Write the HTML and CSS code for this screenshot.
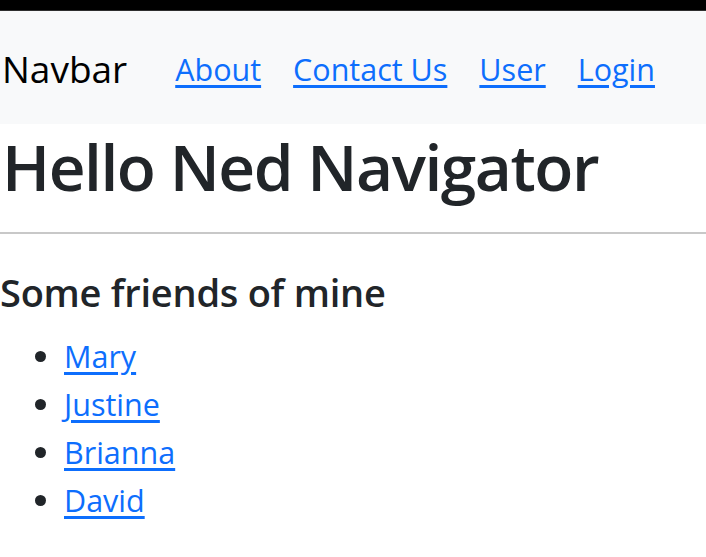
FILE: index.html
```html
<!DOCTYPE html>
<html lang="en">
<head>
<meta charset="utf-8">
<title>Hello Ned Navigator</title>
<link rel="stylesheet" href="styles.css">
</head>
<body>
<div class="topbar"></div>
<nav class="navbar">
  <span class="brand">Navbar</span>
  <ul class="nav-links">
    <li><a href="#">About</a></li>
    <li><a href="#">Contact Us</a></li>
    <li><a href="#">User</a></li>
    <li><a href="#">Login</a></li>
  </ul>
</nav>
<main class="content">
  <h1 class="title">Hello Ned Navigator</h1>
  <hr class="divider">
  <h4 class="subtitle">Some friends of mine</h4>
  <ul class="friends">
    <li><a href="#">Mary</a></li>
    <li><a href="#">Justine</a></li>
    <li><a href="#">Brianna</a></li>
    <li><a href="#">David</a></li>
  </ul>
</main>
</body>
</html>
```

FILE: styles.css
```css
html, body {
  margin: 0;
  padding: 0;
  background: #fff;
}
body {
  font-family: "Open Sans", "Noto Sans", sans-serif;
  color: #212529;
  font-size: 30.5px;
  line-height: 48px;
  overflow: hidden;
}
a {
  color: #0d6efd;
  text-decoration: underline;
  text-decoration-thickness: 3px;
  text-underline-offset: 4px;
}
.topbar {
  height: 10px;
  background: #000;
  border-bottom: 1px solid #2e2e2e;
}
.navbar {
  height: 113px;
  background: #f8f9fa;
  display: flex;
  align-items: center;
  padding-top: 3px;
  box-sizing: border-box;
}
.brand {
  font-size: 37px;
  color: #000;
  margin-right: 32px;
  padding-left: 2px;
}
.nav-links {
  list-style: none;
  margin: 0;
  padding: 0;
  display: flex;
}
.nav-links a {
  display: block;
  padding: 0 16px;
}
.title {
  margin: 0;
  font-size: 64px;
  font-weight: 600;
  letter-spacing: -1.45px;
  line-height: 86px;
  padding-left: 2px;
}
.divider {
  margin: 22px 0 0;
  border: 0;
  border-top: 2px solid #c8c8c8;
}
.subtitle {
  margin: 34px 0 0;
  font-size: 38px;
  font-weight: 600;
  letter-spacing: -0.25px;
  line-height: 48px;
}
.friends {
  margin: 16px 0 0;
  padding-left: 64px;
}
.friends li::marker {
  color: #212529;
}
```
